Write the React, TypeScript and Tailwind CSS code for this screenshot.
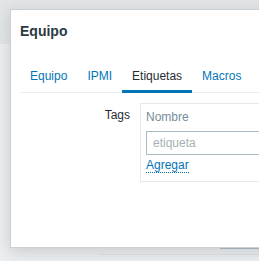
import React from "react";

const tabs = ["Equipo", "IPMI", "Etiquetas", "Macros"];

export default function App() {
  const active = "Etiquetas";

  return (
    <div
      className="relative w-[259px] h-[261px] overflow-hidden bg-[#eceef0] text-[12px] leading-[14px] text-[#1f2c33]"
      style={{ fontFamily: '"Liberation Sans", Arial, sans-serif' }}
    >
      {/* page behind the overlay */}
      <div className="h-[44px] bg-[#e2e5e7]" />
      <div className="absolute left-[220px] top-[248px] w-[60px] h-px bg-[#b4c0c6]" />
      <div className="absolute left-[99px] top-[254px] w-[180px] h-px bg-[#dde1e3]" />

      {/* dialog */}
      <div className="absolute left-[10px] top-[9px] w-[300px] h-[239px] bg-white border border-[#c9cfd3] shadow-[0_4px_14px_rgba(40,55,65,0.18)]">
        <div className="px-[9px] pt-[13px]">
          <h2 className="text-[14px] leading-[17px] font-bold text-[#2a3a44]">Equipo</h2>
        </div>

        <div className="px-[9px] pt-[29px]">
          <ul className="flex border-b border-[#ebeef0]">
            {tabs.map((t) => (
              <li
                key={t}
                className={
                  t === active
                    ? "px-[10px] pb-[6px] mb-[-1px] border-b-[3px] border-[#0275b8] text-[#1f2c33]"
                    : "px-[10px] pb-[9px] text-[#0275b8]"
                }
              >
                {t}
              </li>
            ))}
          </ul>

          <div className="flex pt-[10px]">
            <div className="w-[110px] shrink-0 pt-[5px] text-right">Tags</div>
            <div className="ml-[10px] flex-1 border border-[#e6e9eb] pl-[5px] pt-[6px] pb-[8px]">
              <div className="text-[#768d99]">Nombre</div>
              <input
                className="mt-[7px] block w-full h-[24px] border border-[#acbbc2] px-[6px] outline-none placeholder:text-[#a7b0b5]"
                placeholder="etiqueta"
              />
              <div className="mt-[3px]">
                <span className="inline-block border-b border-dotted border-[#0275b8] text-[#0275b8]">
                  Agregar
                </span>
              </div>
            </div>
          </div>
        </div>
      </div>
    </div>
  );
}
